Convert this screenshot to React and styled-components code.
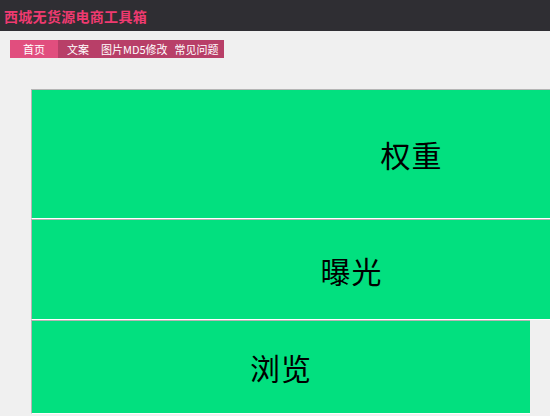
import React from "react";
import styled, { createGlobalStyle } from "styled-components";

const GlobalStyle = createGlobalStyle`
  html, body {
    margin: 0;
    padding: 0;
    background: #f0f0f0;
    overflow: hidden;
    font-family: "Microsoft YaHei", "Noto Sans CJK SC", "Liberation Sans", sans-serif;
  }
`;

const Header = styled.div`
  height: 31px;
  background: #2f2e33;
  display: flex;
  align-items: center;
  padding-left: 4px;
`;

const Title = styled.h1`
  margin: 0;
  font-size: 14px;
  line-height: 1;
  font-weight: bold;
  color: #ee3a70;
  letter-spacing: 0.3px;
`;

const Nav = styled.ul`
  display: flex;
  list-style: none;
  margin: 9px 0 0 10px;
  padding: 0 5px 0 0;
  height: 18px;
  width: max-content;
  background: #b83f68;
`;

const NavItem = styled.li`
  height: 18px;
  line-height: 18px;
  font-size: 11px;
  color: #fff;
  padding: ${(p) => (p.$active ? "0 13px" : `0 0 0 ${p.$indent}px`)};
  background: ${(p) => (p.$active ? "#e14e7e" : "transparent")};
`;

const Funnel = styled.div`
  margin: 31px 0 0 31px;
  display: flex;
  flex-direction: column;
`;

const Bar = styled.div`
  flex: none;
  box-sizing: border-box;
  display: flex;
  align-items: center;
  justify-content: center;
  background: #02e07f;
  border-top: 1px solid #b5b5b5;
  border-left: 1px solid #b5b5b5;
  border-bottom: 1px solid #ffffff;
  font-family: "Noto Sans CJK SC", "Noto Serif CJK SC", serif;
  font-size: 30px;
  color: #000;
  letter-spacing: 1px;

  &:last-child {
    box-shadow: 0 1px 0 #b5b5b5;
  }
`;

const bars = [
  { label: "权重", width: 760, height: 130 },
  { label: "曝光", width: 640, height: 101 },
  { label: "浏览", width: 499, height: 94 },
];

const links = [
  { text: "文案", indent: 9 },
  { text: "图片MD5修改", indent: 12 },
  { text: "常见问题", indent: 7 },
];

export default function App() {
  return (
    <>
      <GlobalStyle />
      <Header>
        <Title>西城无货源电商工具箱</Title>
      </Header>
      <Nav>
        <NavItem $active>首页</NavItem>
        {links.map((l) => (
          <NavItem key={l.text} $indent={l.indent}>
            {l.text}
          </NavItem>
        ))}
      </Nav>
      <Funnel>
        {bars.map((b) => (
          <Bar key={b.label} style={{ width: b.width, height: b.height }}>
            {b.label}
          </Bar>
        ))}
      </Funnel>
    </>
  );
}
